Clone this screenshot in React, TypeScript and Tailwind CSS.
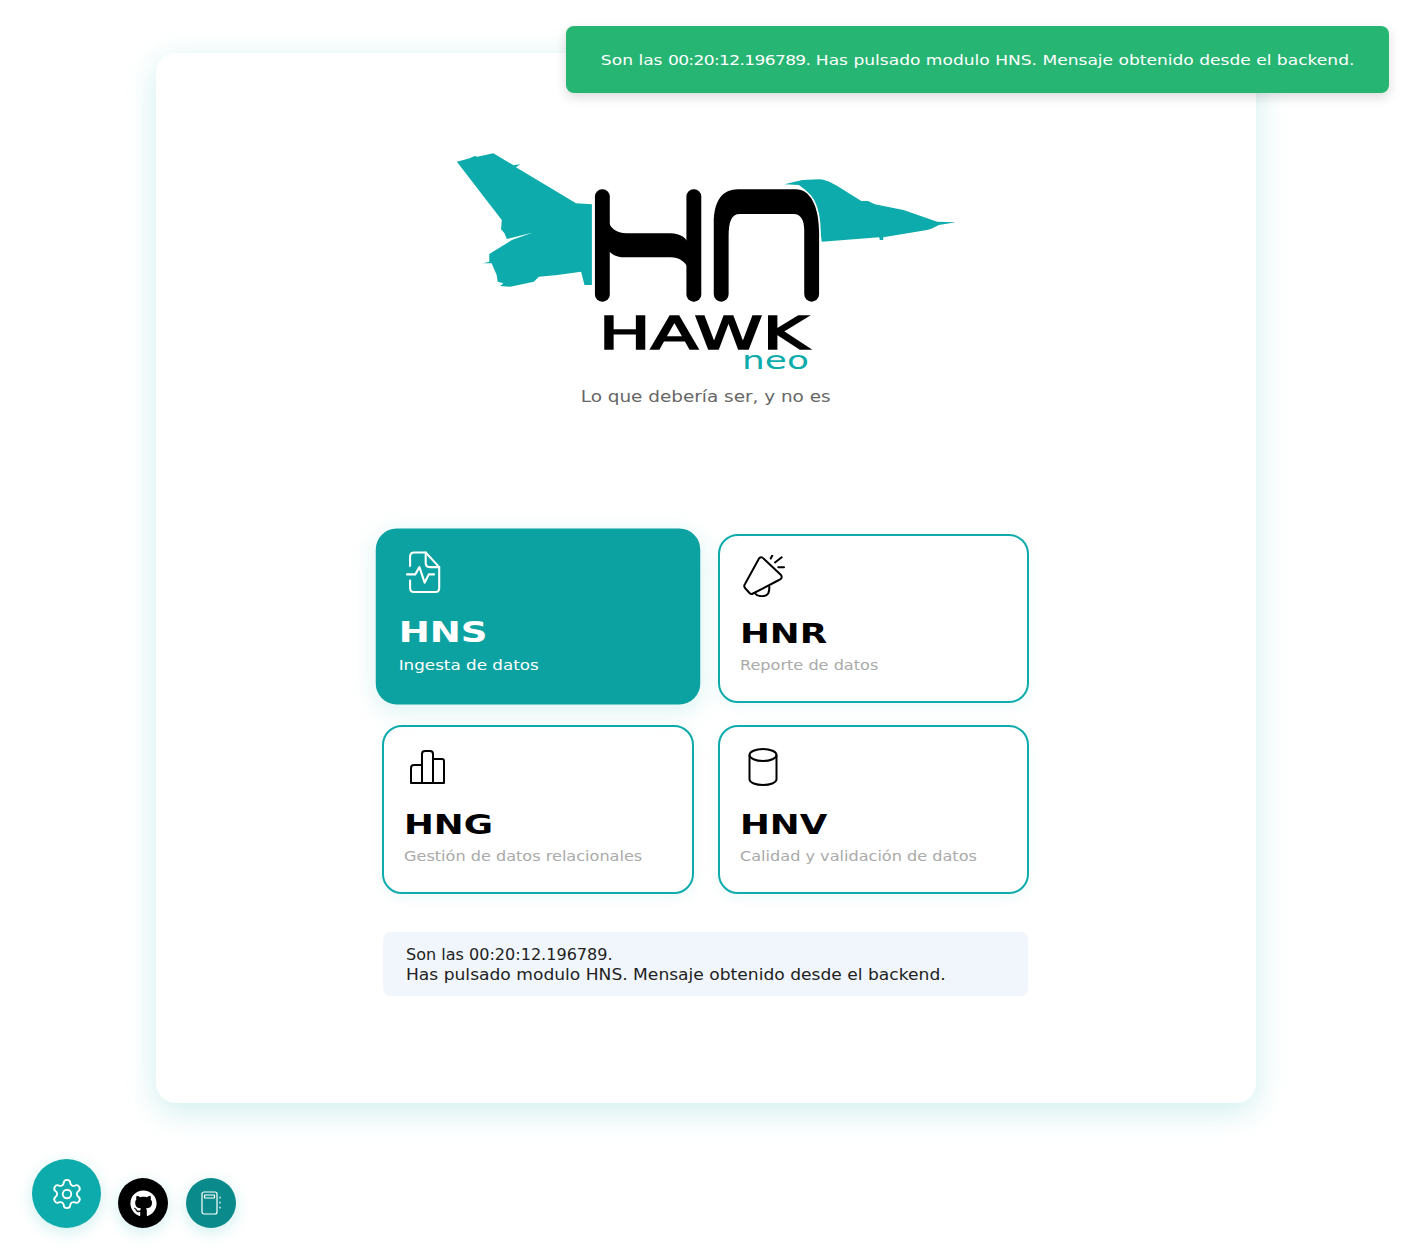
import type { ReactNode } from 'react'
import { Settings } from 'lucide-react'
import { FaGithub } from 'react-icons/fa'

const font = "font-['DejaVu_Sans',sans-serif]"

const Logo = () => (
  <svg viewBox="0 0 1570 735" preserveAspectRatio="none" className="block w-[530px] h-[245px]">
    <path
      fill="#0dabab"
      d="M47,65 L85,55 L100,48 L108,50 L155,40 L215,76 L235,73 L222,82 L400,190 L447,193 L447,435 L425,435 L415,395 L345,405 L290,410 L275,425 L205,440 L175,438 L185,430 L168,425 L165,405 L150,370 L125,370 L143,365 L143,342 L210,300 L270,278 L195,297 L188,280 L178,268 L180,240 Z"
    />
    <path
      fill="#0dabab"
      d="M1018,133 L1070,120 L1120,118 C1145,120 1160,130 1180,142 L1245,183 L1265,183 L1285,193 L1370,210 L1470,245 L1525,247 L1475,255 C1460,263 1450,268 1440,270 L1310,292 L1310,300 L1300,300 L1298,292 L1128,305 L1118,230 L1100,180 L1080,150 L1060,135 Z"
    />
    <rect x="456" y="148" width="44" height="337" rx="21" fill="#000" />
    <rect x="727" y="148" width="44" height="337" rx="21" fill="#000" />
    <path
      fill="#000"
      d="M490,225 C497,265 520,280 550,280 L680,280 C710,280 728,295 735,315 L735,390 C725,365 705,352 680,352 L545,352 C520,352 505,345 490,325 Z"
    />
    <path
      fill="#000"
      stroke="#fff"
      strokeWidth="10"
      paintOrder="stroke"
      d="M808,463 L808,250 C808,180 835,148 880,148 L1050,148 C1095,148 1120,200 1120,280 L1120,463 A22,22 0 0 1 1076,463 L1076,270 C1076,240 1065,222 1045,222 L885,222 C860,222 852,245 852,290 L852,463 A22,22 0 0 1 808,463 Z"
    />
    <text
      x="467"
      y="628"
      fontFamily="'DejaVu Sans', sans-serif"
      fontSize="134"
      stroke="#000"
      strokeWidth="5"
      textLength="620"
      lengthAdjust="spacingAndGlyphs"
      fill="#000"
    >
      HAWK
    </text>
    <text
      x="892"
      y="687"
      fontFamily="'DejaVu Sans', sans-serif"
      fontSize="76"
      textLength="198"
      lengthAdjust="spacingAndGlyphs"
      fill="#0dabab"
    >
      neo
    </text>
  </svg>
)

const FilePulseIcon = () => (
  <svg viewBox="0 0 34 42" fill="none" stroke="currentColor" strokeWidth="2" strokeLinecap="round" strokeLinejoin="round" className="ml-[7px] w-[34px] h-[42px]">
    <path d="M4,15 V6 Q4,2 8,2 H19 L32,16 V36 Q32,40 28,40 H8 Q4,40 4,36 V29" />
    <path d="M19,2 V12 Q19,16 23,16 H32" />
    <path d="M1,23 H9 L13,16 L18,31 L22,23 H27" />
  </svg>
)

const MegaphoneIcon = () => (
  <svg viewBox="0 0 42 42" fill="none" stroke="currentColor" strokeWidth="2" strokeLinecap="round" strokeLinejoin="round" className="ml-[3px] w-[42px] h-[42px]">
    <path d="M16,3.5 Q18.7,1 21,4 L38,20 Q40,23.5 36,25 L10,38.5 Q8,39.5 6.5,38 L2,33 Q0.5,31 2,29 Z" />
    <path d="M12,38.3 C14,41.7 23,42.5 25.3,38.3 Q26.5,35 26.3,31.7" />
    <path d="M27.7,3.5 L29.3,0.5 M32,7.5 L38.7,2.3 M35.3,12.3 L41,12.3" />
  </svg>
)

const BarsIcon = () => (
  <svg viewBox="0 0 36 34" fill="none" stroke="currentColor" strokeWidth="2" strokeLinecap="round" strokeLinejoin="round" className="ml-[5px] w-[36px] h-[34px]">
    <path d="M2,33 H35 V11 Q35,9 33,9 H24 M13,33 V4 Q13,1 16,1 H21 Q24,1 24,4 V33 M13,15 H5 Q2,15 2,18 V33" />
  </svg>
)

const CylinderIcon = () => (
  <svg viewBox="0 0 30 40" fill="none" stroke="currentColor" strokeWidth="2" className="ml-[8px] w-[30px] h-[40px]">
    <ellipse cx="15" cy="8" rx="13.5" ry="6" />
    <path d="M1.5,8 V32 C1.5,40 28.5,40 28.5,32 V8" />
  </svg>
)

const NotebookIcon = () => (
  <svg viewBox="0 0 20 24" fill="none" stroke="#fff" strokeWidth="1.2" strokeLinecap="round" className="w-[20px] h-[24px]">
    <rect x="1" y="1" width="15" height="22" rx="2" />
    <rect x="3.5" y="4" width="10" height="3" rx="0.5" />
    <path d="M19,6 V7 M19,11 V12 M19,16 V17" />
  </svg>
)

type ModuleCardProps = {
  title: string
  text: string
  icon: ReactNode
  active?: boolean
}

const ModuleCard = ({ title, text, icon, active }: ModuleCardProps) => (
  <div
    className={
      active
        ? 'h-[169px] rounded-[20px] border-2 border-[#0da2a2] bg-[#0da2a2] px-[20px] pt-[19px] text-white -translate-y-[2px] scale-x-[1.04] scale-y-[1.04] shadow-[0_6px_24px_rgba(13,171,171,0.15)]'
        : 'h-[169px] rounded-[20px] border-2 border-[#0dabab] bg-white px-[20px] pt-[19px] text-black shadow-[0_4px_14px_rgba(13,171,171,0.07)]'
    }
  >
    <div className="h-[42px] flex items-center">{icon}</div>
    <div className="mt-[22px] h-[30px] text-[27px] leading-[30px] font-bold origin-left scale-x-[1.32]">{title}</div>
    <div
      className={
        active
          ? 'mt-[6px] text-[14px] leading-[20px] whitespace-nowrap origin-left scale-x-[1.15]'
          : 'mt-[6px] text-[14px] leading-[20px] whitespace-nowrap origin-left scale-x-[1.15] text-[#aaaaaa]'
      }
    >
      {text}
    </div>
  </div>
)

export default function App() {
  return (
    <div className={`relative min-h-[1258px] bg-white overflow-hidden pt-[53px] pl-[156px] ${font}`}>
      <div className="w-[1100px] h-[1050px] rounded-[20px] bg-white shadow-[0_8px_32px_rgba(13,171,171,0.2)] flex flex-col items-center pt-[87px] pr-[1px]">
        <Logo />
        <p className="mt-[1px] text-[16px] leading-[22px] text-[#666666] scale-x-[1.15]">Lo que debería ser, y no es</p>
        <div className="mt-[126px] w-[647px] grid grid-cols-2 gap-x-[24px] gap-y-[22px]">
          <ModuleCard active title="HNS" text="Ingesta de datos" icon={<FilePulseIcon />} />
          <ModuleCard title="HNR" text="Reporte de datos" icon={<MegaphoneIcon />} />
          <ModuleCard title="HNG" text="Gestión de datos relacionales" icon={<BarsIcon />} />
          <ModuleCard title="HNV" text="Calidad y validación de datos" icon={<CylinderIcon />} />
        </div>
        <div className="mt-[38px] w-[645px] h-[64px] rounded-[8px] bg-[#f0f6fc] px-[23px] py-[13px] text-[15px] leading-[20px] text-[#222222]">
          <p className="origin-left scale-x-[1.07] whitespace-nowrap">Son las 00:20:12.196789.</p>
          <p className="origin-left scale-x-[1.14] whitespace-nowrap">Has pulsado modulo HNS. Mensaje obtenido desde el backend.</p>
        </div>
      </div>

      <div className="absolute top-[26px] right-[13px] w-[823px] h-[67px] rounded-[8px] bg-[#27b573] shadow-[0_4px_12px_rgba(0,0,0,0.15)] flex items-center justify-center text-white">
        <p className="mt-[2px] text-[14.75px] scale-x-[1.157] whitespace-nowrap">
          Son las <span className="tracking-[-0.55px]">00:20:12.196789.</span> Has pulsado modulo HNS. Mensaje obtenido desde el backend.
        </p>
      </div>

      <button className="absolute left-[32px] top-[1159px] w-[69px] h-[69px] rounded-full bg-[#0dabab] flex items-center justify-center shadow-[0_4px_16px_rgba(13,171,171,0.2)]">
        <Settings className="w-[34px] h-[34px] text-white" strokeWidth={1.3} />
      </button>
      <button className="absolute left-[118px] top-[1178px] w-[50px] h-[50px] rounded-full bg-black flex items-center justify-center shadow-[0_4px_16px_rgba(13,171,171,0.2)]">
        <FaGithub className="w-[27px] h-[27px] text-white" />
      </button>
      <button className="absolute left-[186px] top-[1178px] w-[50px] h-[50px] rounded-full bg-[#0a8a8a] flex items-center justify-center shadow-[0_4px_16px_rgba(13,171,171,0.2)]">
        <NotebookIcon />
      </button>
    </div>
  )
}
